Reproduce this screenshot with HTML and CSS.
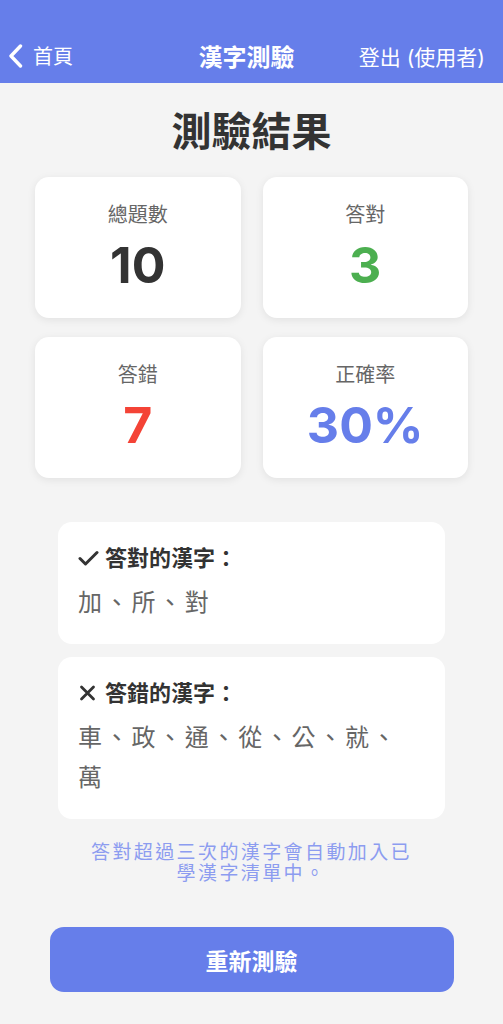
FILE: index.html
```html
<!DOCTYPE html>
<html lang="zh-Hant">
<head>
  <meta charset="UTF-8" />
  <meta name="viewport" content="width=device-width, initial-scale=1.0"/>
  <title>漢字測驗 – 測驗結果</title>
  <link rel="stylesheet" href="styles.css">
</head>
<body>
  <header class="topbar">
    <a class="back" href="#">
      <svg width="15" height="24" viewBox="0 0 15 24"><path d="M12.5 2 L3 12 L12.5 22" fill="none" stroke="#fff" stroke-width="3.4" stroke-linecap="round" stroke-linejoin="round"/></svg>
      首頁
    </a>
    <div class="title">漢字測驗</div>
    <a class="logout" href="#">登出 (使用者)</a>
  </header>

  <main class="page">
    <h1>測驗結果</h1>

    <div class="stats">
      <div class="card">
        <div class="label">總題數</div>
        <div class="num">10</div>
      </div>
      <div class="card">
        <div class="label">答對</div>
        <div class="num green">3</div>
      </div>
      <div class="card">
        <div class="label">答錯</div>
        <div class="num red">7</div>
      </div>
      <div class="card">
        <div class="label">正確率</div>
        <div class="num blue">30%</div>
      </div>
    </div>

    <section class="list">
      <h3>
        <svg width="21" height="16" viewBox="0 0 21 16"><path d="M2 8.5 L7.5 14 L19 2.5" fill="none" stroke="#333" stroke-width="3" stroke-linecap="round" stroke-linejoin="round"/></svg>
        答對的漢字：
      </h3>
      <p>加、所、對</p>
    </section>

    <section class="list">
      <h3>
        <svg width="21" height="16" viewBox="0 0 21 16"><path d="M3.5 2 L15.5 14 M15.5 2 L3.5 14" fill="none" stroke="#333" stroke-width="2.8" stroke-linecap="round"/></svg>
        答錯的漢字：
      </h3>
      <p>車、政、通、從、公、就、萬</p>
    </section>

    <p class="note">答對超過三次的漢字會自動加入已學漢字清單中。</p>

    <button class="retry">重新測驗</button>
  </main>
</body>
</html>
```

FILE: styles.css
```css
body {
  margin: 0;
  background: #f4f4f4;
  font-family: "Inter", "Noto Sans CJK TC", sans-serif;
  color: #333;
}

.topbar {
  background: #667eea;
  color: #fff;
  height: 55px;
  padding: 28px 18px 0 8px;
  display: grid;
  grid-template-columns: 1fr auto 1fr;
  align-items: center;
}

.topbar a {
  color: #fff;
  text-decoration: none;
  font-size: 20px;
}

.back {
  display: flex;
  align-items: center;
  gap: 10px;
}

.title {
  font-size: 24px;
  font-weight: bold;
}

.logout {
  justify-self: end;
  font-size: 21px !important;
}

.page {
  padding: 0 35px;
}

h1 {
  text-align: center;
  font-size: 40px;
  margin: 24px 0 20px;
  line-height: 50px;
  color: #333;
}

.stats {
  display: grid;
  grid-template-columns: 1fr 1fr;
  column-gap: 22px;
  row-gap: 19px;
}

.card {
  background: #fff;
  border-radius: 14px;
  box-shadow: 0 2px 8px rgba(0, 0, 0, 0.08);
  text-align: center;
  height: 141px;
  box-sizing: border-box;
  padding-top: 26px;
}

.label {
  font-size: 20px;
  line-height: 24px;
  color: #666;
}

.num {
  font-size: 50px;
  font-weight: bold;
  line-height: 54px;
  margin-top: 11px;
  color: #333;
}

.green { color: #4caf50; }
.red { color: #f44336; }
.blue { color: #667eea; }

.list {
  background: #fff;
  border-radius: 14px;
  margin: 0 23px 13px;
  padding: 18px 20px 21px;
}

.stats + .list {
  margin-top: 44px;
}

.list h3 {
  margin: 0;
  font-size: 22px;
  line-height: 36px;
  display: flex;
  align-items: center;
  gap: 6px;
}

.list p {
  margin: 7px 0 0;
  font-size: 24px;
  letter-spacing: 2.7px;
  line-height: 40px;
  color: #666;
}

.note {
  width: 335px;
  margin: 23px auto 0;
  text-align: center;
  font-size: 19px;
  letter-spacing: 2.4px;
  line-height: 21px;
  color: #8c9cf0;
}

.retry {
  display: block;
  width: 404px;
  height: 65px;
  margin: 43px auto 0;
  background: #667eea;
  color: #fff;
  border: none;
  border-radius: 14px;
  font-family: inherit;
  font-size: 23px;
  font-weight: bold;
}
```
